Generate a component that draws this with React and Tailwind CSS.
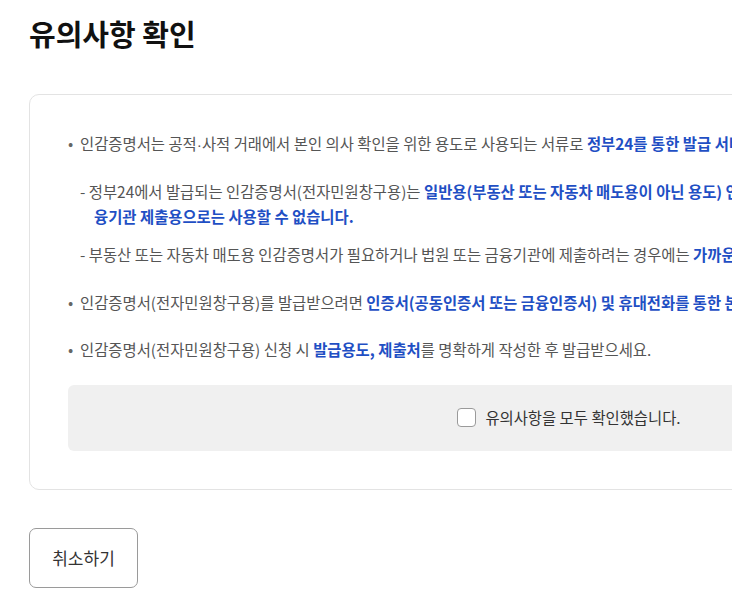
import React from 'react';

const font = { fontFamily: '"Noto Sans CJK KR", "Noto Sans", sans-serif' };

const B = ({ children }) => <strong className="font-bold text-[#1f4fc4]">{children}</strong>;

// narrow middle dot, as in the reference
const Dot = () => <span className="font-['Liberation_Sans',sans-serif]">·</span>;

const Bullet = ({ children }) => (
  <li className="flex">
    <span className="w-[12px] shrink-0 text-[#666]">•</span>
    <div className="flex-1">{children}</div>
  </li>
);

const Sub = ({ children }) => (
  <li className="pl-[14px] -indent-[14px]">- {children}</li>
);

const App = () => {
  return (
    <div className="w-full overflow-hidden bg-white" style={font}>
      <div className="w-[1138px] px-[29px] pt-[13px] pb-[14px]">
        <h1 className="text-[29px] font-bold leading-[40px] text-[#111]">유의사항 확인</h1>

        <div className="mt-[41px] rounded-[10px] border border-[#e3e3e3] px-[38px] pt-[36px] pb-[38px]">
          <ul className="flex flex-col gap-[22px] text-[15.4px] leading-[25px] text-[#555]">
            <li className="flex flex-col">
              <div className="flex">
                <span className="w-[12px] shrink-0 text-[#666]">•</span>
                <p className="flex-1">
                  인감증명서는 공적<Dot />사적 거래에서 본인 의사 확인을 위한 용도로 사용되는 서류로 <B>정부24를 통한 발급 서비스는 일반용에 한하여 제공됩니다.</B>
                </p>
              </div>
              <ul className="mt-[22px] ml-[12px] mr-[-29px] flex flex-col gap-[13px]">
                <Sub>
                  정부24에서 발급되는 인감증명서(전자민원창구용)는 <B>일반용(부동산 또는 자동차 매도용이 아닌 용도) 인감증명서로, 부동산 또는 자동차 매도용이나 법원 또는 금융기관 제출용으로는 사용할 수 없습니다.</B>
                </Sub>
                <Sub>
                  부동산 또는 자동차 매도용 인감증명서가 필요하거나 법원 또는 금융기관에 제출하려는 경우에는 <B>가까운 읍<Dot />면<Dot />동 주민센터를 방문하세요.</B>
                </Sub>
              </ul>
            </li>
            <Bullet>
              인감증명서(전자민원창구용)를 발급받으려면 <B>인증서(공동인증서 또는 금융인증서) 및 휴대전화를 통한 본인확인</B>이 필요합니다.
            </Bullet>
            <Bullet>
              인감증명서(전자민원창구용) 신청 시 <B>발급용도, 제출처</B>를 명확하게 작성한 후 발급받으세요.
            </Bullet>
          </ul>

          <div className="mt-[23px] flex h-[66px] items-center justify-center rounded-[6px] bg-[#f0f0f0]">
            <label className="flex items-center gap-[9px] text-[15.4px] text-[#333]">
              <span className="h-[19px] w-[19px] rounded-[4px] border border-[#9a9a9a] bg-white"></span>
              유의사항을 모두 확인했습니다.
            </label>
          </div>
        </div>

        <button className="mt-[38px] h-[60px] w-[109px] rounded-[7px] border border-[#9a9a9a] bg-white text-[17px] text-[#333]">
          취소하기
        </button>
      </div>
    </div>
  );
};

export default App;
